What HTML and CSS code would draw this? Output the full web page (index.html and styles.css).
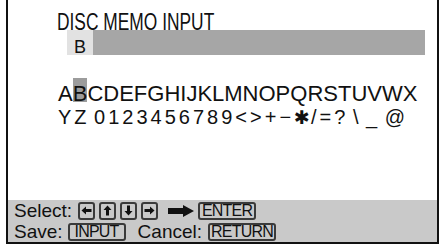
FILE: index.html
```html
<!DOCTYPE html>
<html>
<head>
<meta charset="utf-8">
<link rel="stylesheet" href="styles.css">
</head>
<body>
<div class="screen">
  <div class="main">
    <div class="title">DISC MEMO INPUT</div>
    <div class="bar">
      <div class="bar-cur">B</div>
      <div class="bar-rest"></div>
    </div>
    <div class="row1">A<span class="sel">B</span>CDEFGHIJKLMNOPQRSTUVWX</div>
    <div class="row2">YZ 0123456789&lt;&gt;+−<span class="star">✱</span>/=? \ _ @</div>
  </div>
  <div class="footer">
    <div class="fline">
      <span class="label">Select:</span>
      <span class="key key-arrow first">
        <svg width="11" height="11" viewBox="0 0 11 11"><polygon points="0.5,5.5 5,1.5 5,4 10.5,4 10.5,7 5,7 5,9.5" fill="#111"/></svg>
      </span>
      <span class="key key-arrow">
        <svg width="11" height="11" viewBox="0 0 11 11"><polygon points="5.5,0.5 9.5,5 7,5 7,10.5 4,10.5 4,5 1.5,5" fill="#111"/></svg>
      </span>
      <span class="key key-arrow">
        <svg width="11" height="11" viewBox="0 0 11 11"><polygon points="5.5,10.5 9.5,6 7,6 7,0.5 4,0.5 4,6 1.5,6" fill="#111"/></svg>
      </span>
      <span class="key key-arrow">
        <svg width="11" height="11" viewBox="0 0 11 11"><polygon points="10.5,5.5 6,1.5 6,4 0.5,4 0.5,7 6,7 6,9.5" fill="#111"/></svg>
      </span>
      <svg class="big-arrow" width="26" height="12" viewBox="0 0 26 12"><polygon points="0,3 15,3 15,0 26,6 15,12 15,9 0,9" fill="#111"/></svg>
      <span class="key key-enter">ENTER</span>
    </div>
    <div class="fline">
      <span class="label">Save:</span>
      <span class="key key-input">INPUT</span>
      <span class="label label-cancel">Cancel:</span>
      <span class="key key-return">RETURN</span>
    </div>
  </div>
</div>
</body>
</html>
```
FILE: styles.css
```css
html, body {
  margin: 0;
  padding: 0;
  background: #fff;
}
body {
  font-family: "Liberation Sans", Arial, sans-serif;
  color: #111;
}
.screen {
  margin-left: 6px;
  width: 433px;
  height: 244px;
  box-sizing: border-box;
  border-left: 2px solid #111;
  border-right: 2px solid #111;
  border-bottom: 2px solid #111;
  display: flex;
  flex-direction: column;
}
.main {
  flex: 1;
  padding: 14px 0 0 50px;
}
.title {
  font-size: 23px;
  line-height: 16px;
  white-space: nowrap;
  transform: scaleX(0.755);
  transform-origin: left center;
  margin-left: -1px;
}
.bar {
  display: flex;
  height: 25px;
  margin-left: 9px;
  width: 358px;
}
.bar-cur {
  width: 26px;
  box-sizing: border-box;
  background: #e2e2e2;
  font-size: 18px;
  line-height: 16px;
  padding: 9px 0 0 7px;
}
.bar-rest {
  flex: 1;
  background: #a6a6a6;
}
.row1 {
  margin-top: 23px;
  font-size: 22px;
  line-height: 24px;
  white-space: nowrap;
}
.sel {
  display: inline-block;
  padding-top: 5px;
  line-height: 22px;
  background: linear-gradient(#9c9c9c, #9c9c9c) no-repeat top / 100% 24px;
  vertical-align: baseline;
}
.row2 {
  font-size: 20px;
  line-height: 22px;
  letter-spacing: 3px;
  word-spacing: -4px;
  white-space: nowrap;
}
.star {
  font-family: "DejaVu Sans", sans-serif;
  font-size: 19px;
  letter-spacing: 1px;
}
.footer {
  height: 42px;
  background: #c9c9c9;
  padding-left: 6px;
}
.fline {
  display: flex;
  align-items: center;
  height: 21px;
  font-size: 19px;
  line-height: 21px;
  white-space: nowrap;
}
.key {
  display: inline-flex;
  align-items: center;
  justify-content: center;
  box-sizing: border-box;
  height: 18px;
  border: 2px solid #3a3a3a;
  border-radius: 3px;
  font-size: 16px;
  letter-spacing: -0.8px;
  line-height: 16px;
}
.key-arrow {
  width: 17px;
  margin-left: 4px;
}
.key-arrow.first {
  margin-left: 6px;
}
.big-arrow {
  margin-left: 10px;
}
.key-enter {
  width: 58px;
  margin-left: 4px;
}
.key-input {
  width: 58px;
  margin-left: 5px;
}
.label-cancel {
  margin-left: 12px;
}
.key-return {
  width: 68px;
  margin-left: 6px;
}
```
